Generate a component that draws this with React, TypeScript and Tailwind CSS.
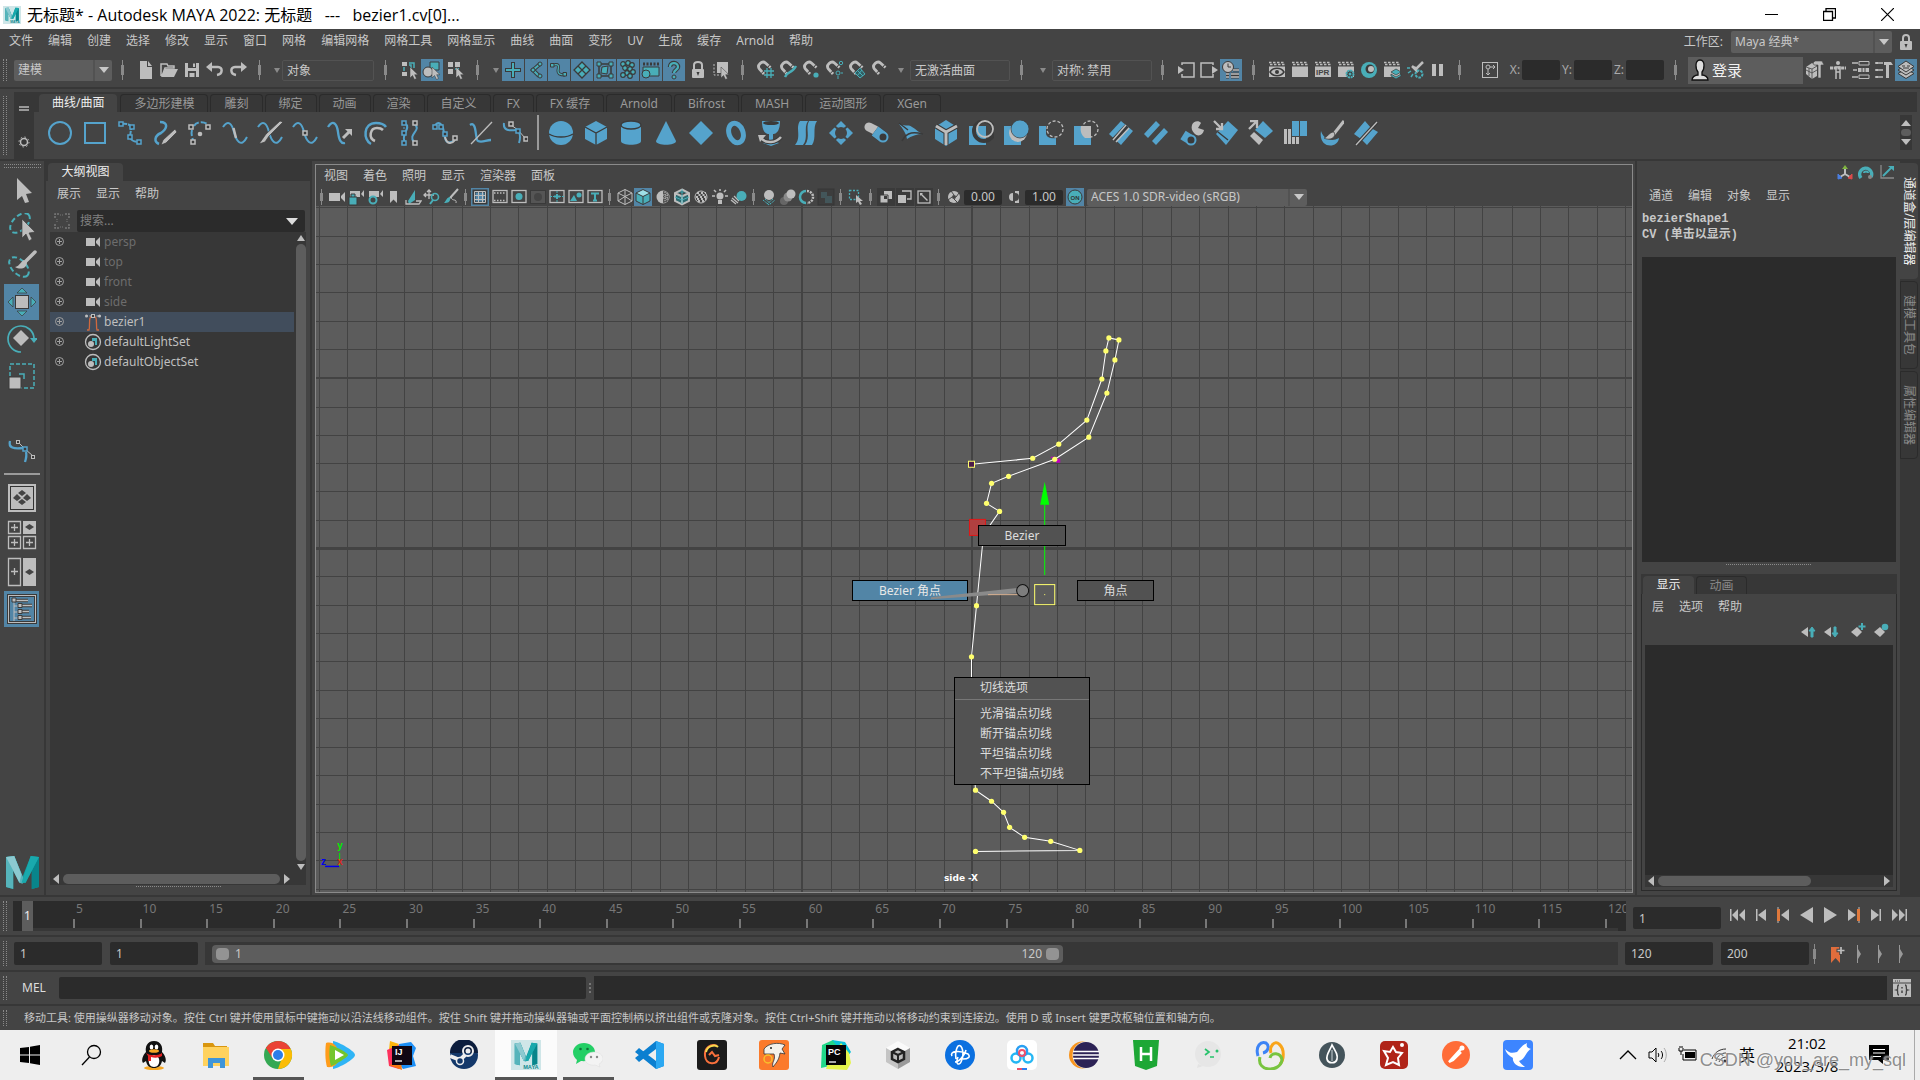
import React from 'react';

const G = '#bdbdbd';
const T = '#49aeb8';
const B = '#55a3cc';
const K = '#3a3a3a';

interface IconProps {
  box?: number;
  size?: number;
  children: React.ReactNode;
}

const Icon: React.FC<IconProps> = ({ box = 20, size, children }) => (
  <svg width={size ?? box} height={size ?? box} viewBox={`0 0 ${box} ${box}`} fill="none" className="shrink-0" aria-hidden="true">
    {children}
  </svg>
);

const Tool: React.FC<{ label: string; className?: string; active?: boolean; children: React.ReactNode }> = ({ label, className = 'h-[22px] w-[23px]', active, children }) => (
  <button type="button" aria-label={label} className={`flex shrink-0 items-center justify-center ${className}`}>
    <span className={`flex h-full w-full items-center justify-center ${active ? 'mr-px bg-[#5285a6]' : ''}`}>{children}</span>
  </button>
);

const Bar: React.FC<{ className?: string; h?: number }> = ({ className = 'w-[22px]', h = 20 }) => (
  <span className={`flex shrink-0 justify-center ${className}`}>
    <svg width="4" height={h} viewBox={`0 0 4 ${h}`} aria-hidden="true">
      <path d={`M1.5 0V${h}`} stroke="#8a8a8a" />
      <rect x="0" y={h / 4} width="3" height={h / 2} fill="#8a8a8a" />
    </svg>
  </span>
);

const Caret: React.FC<{ className?: string }> = ({ className = 'w-[11px]' }) => (
  <span className={`flex shrink-0 justify-center ${className}`}>
    <svg width="6" height="5" viewBox="0 0 6 5" aria-hidden="true"><path d="M0 0H6L3 5Z" fill="#8a8a8a" /></svg>
  </span>
);

const Grip: React.FC = () => <span className="my-1 ml-[3px] w-1 shrink-0 self-stretch border-x border-dotted border-[#8a8a8a]" />;

const Dropdown: React.FC<{ label: string; value: string; className: string }> = ({ label, value, className }) => (
  <div className={`flex shrink-0 items-stretch overflow-hidden rounded-xs bg-[#5d5d5d] ${className}`}>
    <select aria-label={label} className="min-w-0 flex-1 appearance-none bg-transparent pl-1 text-[#c8c8c8] outline-none">
      <option>{value}</option>
    </select>
    <span className="flex w-[19px] items-center justify-center border-l-2 border-[#525252]">
      <svg width="10" height="6" viewBox="0 0 10 6" aria-hidden="true"><path d="M0 0H10L5 6Z" fill="#c8c8c8" /></svg>
    </span>
  </div>
);

const MenuRow: React.FC<{ items: string[]; className?: string }> = ({ items, className = '' }) => (
  <nav className={`flex gap-[15px] ${className}`}>
    {items.map((m) => <button type="button" key={m} className="whitespace-nowrap">{m}</button>)}
  </nav>
);

const Rule: React.FC = () => <div className="h-0.5 shrink-0 bg-[#373737]" />;

/* ---------- shared drawings ---------- */

const Node: React.FC<{ x: number; y: number; c?: string }> = ({ x, y, c = B }) => (
  <rect x={x - 2} y={y - 2} width="4" height="4" fill={K} stroke={c} strokeWidth="1.5" />
);

const Clapper: React.FC<{ children?: React.ReactNode; c?: string }> = ({ children, c = G }) => (
  <Icon>
    <path d="M2 2.500H18" stroke={c} strokeWidth="1.500" strokeDasharray="2.500 1.500" />
    <path d="M3 4.500H18" stroke={c} strokeWidth="1.500" strokeDasharray="2.500 1.500" />
    <path d="M2 6.500H18V17H2Z" fill={c} />
    {children}
  </Icon>
);

const Magnet: React.FC<{ children?: React.ReactNode }> = ({ children }) => (
  <Icon>
    <path d="M8 14L3.500 9C0.500 5.500 6 0 9.500 3L14.500 7.500" stroke={G} strokeWidth="2.800" />
    <path d="M5.200 13.400L8.200 10.600M11.500 7.500L14 4.500" stroke={K} />
    {children}
  </Icon>
);

const MayaLogo: React.FC<{ size: number; plate?: boolean }> = ({ size, plate }) => (
  <svg width={size} height={size} viewBox="0 0 32 32" aria-hidden="true">
    {plate && <rect width="32" height="32" fill="#cfe6e8" />}
    <g transform={plate ? 'translate(4 3) scale(.75)' : ''}>
      <path d="M0 1L8 0L16 20L24 0L32 1V30L25 32V14L19 26H13L7 14V32L0 30Z" fill="#109b9f" />
      <path d="M0 1L8 0L18 24L16 27L13 26L7 14V32L0 30Z" fill="#56b4bb" />
      <path d="M0 1L8 0L15 18L13 26L7 14Z" fill="#8cc9d0" />
      <path d="M32 1V30L25 32V14Z" fill="#08858b" />
      <path d="M24 0L32 1L19 26H15Z" fill="#19a9ad" />
    </g>
    {plate && <text x="13" y="31" fontSize="6" fontWeight="700" fontFamily="Liberation Sans, sans-serif" fill="#128a90">MAYA</text>}
  </svg>
);

const fileIcons: [string, React.ReactNode][] = [
  ['新建场景', <Icon><path d="M4 1H11V7H16V19H4Z" fill={G} /><path d="M12 1L16 6H12Z" fill={G} /></Icon>],
  ['打开场景', <Icon><path d="M2 16V4H8L9 6H15V8H6L3 16" stroke={G} strokeWidth="1.500" /><path d="M6 9H19L15 17H2Z" fill={G} /></Icon>],
  ['保存场景', <Icon><path d="M3 3H17V17H3Z" fill={G} /><path d="M6 3H14V8H6ZM6 11H14V17H6Z" fill="#444" /><path d="M11 3.500H13V7H11ZM7.500 13H12.500V17H7.500Z" fill={G} /></Icon>],
  ['撤销', <Icon><path d="M6 7H13C18 7 18 14 12 15" stroke={G} strokeWidth="2.500" /><path d="M1 7L7 2V12Z" fill={G} /></Icon>],
  ['重做', <Icon><path d="M14 7H7C2 7 2 14 8 15" stroke={G} strokeWidth="2.500" /><path d="M19 7L13 2V12Z" fill={G} /></Icon>],
];

const pointer = <path d="M10 7V18L12.500 15.500L14.500 19.500L16.500 18.500L14.700 14.700H18Z" fill={G} stroke={K} strokeWidth=".5" />;

const maskIcons: [string, React.ReactNode][] = [
  ['控制柄', <><path d="M10 2V18M2 10H18" stroke={K} strokeWidth="4" /><path d="M10 3V17M3 10H17" stroke={T} strokeWidth="2" /></>],
  ['关节', <><path d="M14 4L7 10L13 16" stroke={K} strokeWidth="4" /><path d="M14 4L7 10L13 16" stroke={T} strokeWidth="2" /><circle cx="14" cy="4" r="2" fill={T} stroke={K} /><circle cx="7" cy="10" r="2" fill={T} stroke={K} /><circle cx="14" cy="16" r="2" fill={T} stroke={K} /></>],
  ['曲线', <><path d="M4 5C12 3 9 8 9 11S11 15 16 15" stroke={K} strokeWidth="3" /><path d="M4 5C12 3 9 8 9 11S11 15 16 15" stroke={T} strokeWidth="1.300" /><path d="M1.500 3.500H5V7H1.500ZM14 12.500H17.500V16H14Z" fill={T} stroke={K} /></>],
  ['曲面', <path d="M10 2L18 10L10 18L2 10ZM6 6L14 14M14 6L6 14" fill={T} stroke={K} strokeWidth="1.300" />],
  ['变形', <><path d="M4 4H16V16H4Z" fill="none" stroke={K} strokeWidth="1.500" /><path d="M7 7L13 6L12 14L6 13Z" fill={T} stroke={K} /><path d="M2 2H6V6H2ZM14 2H18V6H14ZM2 14H6V18H2ZM14 14H18V18H14Z" fill={T} stroke={K} /></>],
  ['动力学', <>{[[5, 4], [10, 3], [14, 5], [7, 8], [12, 9], [15, 12], [9, 13], [5, 15], [12, 16]].map(([x, y]) => <circle key={`${x}${y}`} cx={x} cy={y} r="2.300" fill={T} stroke={K} strokeWidth="1.200" />)}</>],
  ['渲染', <><path d="M2 4H18" stroke={K} strokeWidth="3" strokeDasharray="2 1.500" /><path d="M2 7H18V16H2Z" fill={T} stroke={K} /><circle cx="5" cy="14" r="4" fill={T} stroke={K} /></>],
  ['杂项', <><path d="M6 7C6 1.500 14 2 14 7C14 10 10 9.500 10 13" stroke={K} strokeWidth="4.500" /><path d="M6 7C6 1.500 14 2 14 7C14 10 10 9.500 10 13" stroke={T} strokeWidth="2.300" /><circle cx="10" cy="17" r="2" fill={T} stroke={K} /></>],
];

const snapIcons: [string, React.ReactNode][] = [
  ['捕捉到栅格', <path d="M8 11H18M8 15H18M11 8V18M15 8V18" stroke={T} strokeWidth="1.300" />],
  ['捕捉到曲线', <path d="M6 17C9 10 12 15 17 6" stroke={T} strokeWidth="2.500" />],
  ['捕捉到点', <circle cx="14" cy="15" r="2.600" fill={T} />],
  ['捕捉到投影中心', <><circle cx="16" cy="3" r="1.700" stroke={T} /><circle cx="13" cy="13" r="2" stroke={T} /><path d="M13 16V19M16 13H18" stroke={T} /></>],
  ['捕捉到视图平面', <path d="M12 8L17 14L12 18L7 13ZM9 10L15 16M14 10L9 16" stroke={T} fill="#315e63" />],
  ['激活', null],
];

const renderIcons: [string, React.ReactNode][] = [
  ['显示渲染视图', <Clapper><path d="M3 12C6 7 14 7 17 12C14 17 6 17 3 12Z" fill={G} stroke={K} strokeWidth="1.500" /><circle cx="10" cy="12" r="2" fill={K} /></Clapper>],
  ['渲染当前帧', <Clapper />],
  ['IPR 渲染', <Clapper><text x="3" y="15" fontSize="8" fontWeight="700" fontFamily="Liberation Sans, sans-serif" fill="#444">IPR</text></Clapper>],
  ['渲染设置', <Clapper><circle cx="14" cy="14" r="3.500" fill={K} stroke={T} strokeWidth="2" strokeDasharray="2 .7" /><circle cx="14" cy="14" r="1.500" fill={T} /></Clapper>],
  ['Hypershade', <Icon><circle cx="10" cy="10" r="8" fill={T} /><circle cx="11" cy="9" r="4.500" fill={K} /><circle cx="12" cy="9" r="3" fill={G} /></Icon>],
  ['渲染设置编辑器', <Clapper><path d="M14 9L19 12L14 15L9 12ZM9 14L14 17L19 14V16L14 19L9 16Z" fill={T} stroke={K} strokeWidth=".7" /></Clapper>],
  ['灯光编辑器', <Icon><path d="M18 2L11 9L9 7M7 6L13 12" stroke={G} strokeWidth="2.500" /><circle cx="14" cy="14" r="3.500" stroke={T} strokeWidth="2" strokeDasharray="2.500 1" /><path d="M2 8H5M3 13L6 11M6 17L8 14" stroke={T} strokeWidth="1.500" /></Icon>],
  ['暂停', <Icon><path d="M6 4V16M13 4V16" stroke={G} strokeWidth="4" /></Icon>],
];

const S = 'M1 7C6 -1 10 4 12 12S19 29 25 17';

const shelfCurves: React.ReactNode[] = [
  <circle cx="13" cy="13" r="11" stroke={B} strokeWidth="2" />,
  <rect x="3" y="3" width="20" height="20" stroke={B} strokeWidth="2" />,
  <><path d="M3 4C10 3 15 4 14 10S11 21 21 22" stroke={B} strokeWidth="2" strokeDasharray="7 1" /><Node x={4} y={4} /><Node x={15} y={7} /><Node x={13} y={17} /><Node x={22} y={22} /></>,
  <><path d="M8 2C17 2 15 9 9 13C2 16 2 22 7 24" stroke={B} strokeWidth="2.500" /><path d="M23 9L25 12L14 23L9 25L11 20Z" fill={G} stroke={K} strokeWidth=".7" /></>,
  <><path d="M7 6C9 2 16 1 20 4M5 10C4 13 5 17 6 20" stroke={B} strokeWidth="2" strokeDasharray="6 2" /><Node x={4} y={7} c={G} /><Node x={21} y={7} c={G} /><Node x={6} y={22} c={G} /><circle cx="13" cy="14" r="2.300" fill={G} /></>,
  <><path d={S} stroke={B} strokeWidth="2" /><path d="M11.500 8L14 18" stroke={G} strokeWidth="2.500" /></>,
  <><path d={S} stroke={B} strokeWidth="2" /><path d="M26 2L12 16L8 22L2 24L9 14L23 1Z" fill={G} stroke={K} strokeWidth=".7" /></>,
  <><path d={S} stroke={B} strokeWidth="2" /><Node x={13} y={13} c={G} /></>,
  <><path d="M1 7C6 -1 10 4 11 12S14 24 18 23" stroke={B} strokeWidth="2.300" /><path d="M16 18L22 12" stroke={G} strokeWidth="3" /><path d="M18 9H25V16Z" fill={G} /></>,
  <><path d="M9 24C1 20 1 3 14 3C19 3 22 4 24 7" stroke={B} strokeWidth="2.500" /><path d="M13 21C6 18 8 8 15 8C19 8 20 9 21 10" stroke={G} strokeWidth="2.500" /></>,
  <><path d="M7 3V23" stroke={B} strokeDasharray="2 2" /><path d="M17 4C26 10 10 14 17 22M9 4C14 8 3 16 8 22" stroke={B} strokeWidth="2" /><Node x={7} y={3} /><Node x={7} y={13} /><Node x={7} y={23} /><Node x={18} y={3} c={G} /><Node x={18} y={23} c={G} /></>,
  <><path d="M2 7C6 -1 11 4 12 13S15 25 23 20" stroke={B} strokeWidth="2" /><path d="M13 17C15 25 20 24 23 20" stroke={G} strokeWidth="2" /><Node x={3} y={7} /><Node x={9} y={7} /><Node x={13} y={14} /><Node x={23} y={18} c={G} /></>,
  <><path d="M3 5C10 0 8 20 11 21C15 23 19 20 24 20" stroke={B} strokeWidth="2.300" /><path d="M4 24L25 2" stroke={G} strokeWidth="1.300" /></>,
  <><path d="M2 3C1 10 6 11 14 10M17 12C19 17 18 20 17 23" stroke={B} strokeWidth="2" /><path d="M9 5L16 10L23 18" stroke={G} /><Node x={9} y={4} c={G} /><Node x={16} y={11} /><Node x={24} y={19} c={G} /></>,
];

const shelfSurfaces: React.ReactNode[] = [
  <><circle cx="13" cy="13" r="12" fill={B} /><path d="M1 14C7 18 19 18 25 14" stroke={K} strokeWidth="1.500" /></>,
  <><path d="M13 1L24 7V19L13 25L2 19V7Z" fill={B} /><path d="M2 7L13 13L24 7M13 13V25" stroke={K} strokeWidth="1.300" /></>,
  <><path d="M3 5V21C3 26 23 26 23 21V5Z" fill={B} /><ellipse cx="13" cy="5" rx="10" ry="4" fill={B} stroke={K} strokeWidth="1.300" /></>,
  <path d="M13 1L23 21C23 26 3 26 3 21Z" fill={B} />,
  <path d="M13 1L25 13L13 25L1 13Z" fill={B} />,
  <ellipse cx="13" cy="13" rx="7" ry="10" stroke={B} strokeWidth="5" transform="rotate(-20 13 13)" />,
  <><path d="M4 1H22C22 13 17 14 15 14V20L21 23L13 26L5 23L11 20V14C8 14 4 12 4 1Z" fill={B} /><ellipse cx="13" cy="3" rx="8" ry="2" fill={K} /><path d="M3 18C8 24 18 23 23 17" stroke={K} strokeWidth="4.500" /><path d="M3 18C8 24 18 23 23 17" stroke={G} strokeWidth="2.500" /><path d="M0 15H8L2 22Z" fill={G} /></>,
  <path d="M7 1H15C10 8 16 18 10 25H2C9 17 2 8 7 1ZM16 1H24C19 8 24 18 19 25H12C18 17 12 8 16 1Z" fill={B} />,
  <><path d="M13 1L25 13L13 25L1 13Z" fill={B} /><circle cx="13" cy="13" r="6" fill="#444" /><path d="M5 5L10 9M21 5L16 9M5 21L10 17M21 21L16 17" stroke="#444" strokeWidth="2" /></>,
  <><path d="M6 7L12 10" stroke={G} strokeWidth="9" strokeLinecap="round" /><path d="M12 11L20 17" stroke={K} strokeWidth="12" /><path d="M12 11L20 17" stroke={B} strokeWidth="11" /><circle cx="20" cy="17" r="4.500" fill={K} stroke={B} strokeWidth="2" /></>,
  <><path d="M1 4C9 7 11 4 14 7C19 10 20 12 25 14C19 14 13 16 9 19C8 13 5 9 1 4Z" fill={B} /><path d="M4 21C9 11 17 12 25 14M1 3L10 10" stroke={K} strokeWidth="1.500" /></>,
  <><path d="M13 0L24 7V19L13 26L2 19V7Z" fill={B} /><path d="M3 6L13 12L24 6M13 12V25" stroke={K} strokeWidth="5" /><path d="M3 6L13 12L24 6M13 12V25" stroke={G} strokeWidth="3" /></>,
  <><path d="M1 6H18V25H1Z" fill={B} /><circle cx="16" cy="11" r="10" stroke={K} strokeWidth="4" /><circle cx="17" cy="9" r="8" stroke={G} strokeWidth="1.800" /></>,
  <><path d="M1 6H18V25H1Z" fill={B} /><circle cx="15" cy="13" r="9" fill={G} /><circle cx="17" cy="9" r="9" fill={B} stroke={K} strokeWidth=".7" /></>,
  <><path d="M1 6H8V14C9 18 14 19 18 18V25H1Z" fill={B} /><circle cx="17" cy="9" r="8" stroke={G} strokeDasharray="3 2" strokeWidth="1.300" /></>,
  <><path d="M1 6H18V25H1Z" fill={B} /><path d="M8 6H18V18H12C8 15 7 10 8 6Z" fill={G} /><circle cx="17" cy="9" r="8" stroke={G} strokeDasharray="3 2" strokeWidth="1.300" /></>,
  <><path d="M13 1L25 11L13 25L1 14Z" fill={B} /><path d="M6 20L19 6" stroke={K} strokeWidth="5" /><path d="M5 20L18 5M8 22L21 8" stroke={G} strokeWidth="1.500" /></>,
  <path d="M13 1L17 5L5 18L1 14ZM21 8L25 12L13 25L9 21Z" fill={B} />,
  <><path d="M14 5C15 1 21 0 23 3L20 8L26 10C25 16 19 17 16 13C14 11 13 8 14 5Z" fill={G} /><path d="M5 15L13 20" stroke={B} strokeWidth="10" /><circle cx="13" cy="20" r="4.500" fill={K} stroke={B} strokeWidth="2" /></>,
  <><path d="M15 1L25 10L13 25L3 14Z" fill={B} /><path d="M5 12L15 20" stroke={K} strokeWidth="1.500" /><path d="M1 1L8 8M9 3V9H3" stroke={G} strokeWidth="2.300" /></>,
  <><path d="M15 1L25 11L17 18L7 10Z" fill={B} /><path d="M6 12L15 20L11 25L2 16Z" fill={G} /><path d="M1 9L8 2M2 1H9V8" stroke={G} strokeWidth="2.300" /></>,
  <><path d="M9 1H16V16H9ZM17 1H24V16H17Z" fill={B} /><path d="M2.500 9V24M6.500 9V24M10.500 17V24M14.500 17V24" stroke={G} strokeWidth="3" /></>,
  <><path d="M3 11C0 29 20 29 21 18C14 22 6 20 3 11Z" fill={B} /><path d="M26 1L15 15" stroke={G} strokeWidth="3" /><path d="M16 12C19 18 11 21 6 18C10 17 11 12 16 12Z" fill={G} stroke={K} strokeWidth=".7" /></>,
  <><path d="M12 1L18 8L25 12L14 25L8 19L1 14Z" fill={B} /><path d="M3 25L24 2" stroke={K} strokeWidth="3.500" /><path d="M3 25L24 2" stroke={G} strokeWidth="1.300" /></>,
];

const shelfTabs = ['曲线/曲面', '多边形建模', '雕刻', '绑定', '动画', '渲染', '自定义', 'FX', 'FX 缓存', 'Arnold', 'Bifrost', 'MASH', '运动图形', 'XGen'];

const StatusLine: React.FC = () => (
  <div className="flex h-8 shrink-0 items-center overflow-hidden pb-0.5">
    <Grip />
    <Dropdown label="菜单集" value="建模" className="ml-[7px] h-[21px] w-[98px]" />
    <Bar />
    {fileIcons.map(([n, i]) => <Tool key={n} label={n}>{i}</Tool>)}
    <Bar />
    <Caret />
    <input aria-label="选择遮罩" defaultValue="对象" className="h-[21px] w-[92px] shrink-0 rounded-xs border border-[#525252] bg-transparent px-1 outline-none" />
    <Bar className="w-6" />
    <Tool label="按层次选择"><Icon><path d="M2 2H7V6H2ZM2 12H7V16H2Z" fill={G} /><path d="M4 7V11M9 3H14V8M9 5H11V9" stroke={T} strokeWidth="1.500" />{pointer}</Icon></Tool>
    <Tool label="按对象选择" active><Icon><path d="M8 2H17V10H8Z" fill={T} stroke={K} /><circle cx="6" cy="12" r="5" fill={G} stroke={K} />{pointer}</Icon></Tool>
    <Tool label="按组件选择"><Icon><path d="M2 2H7V7H2ZM9 2H14V7H9ZM2 9H7V14H2Z" fill={G} /><path d="M9 9H13" stroke={T} strokeWidth="2" />{pointer}</Icon></Tool>
    <Bar />
    <Caret className="w-[13px]" />
    {maskIcons.map(([n, i]) => <Tool key={n} label={n} active><Icon>{i}</Icon></Tool>)}
    <Tool label="锁定当前选择"><Icon><path d="M6 9V5C6 1 14 1 14 5V9" stroke={G} strokeWidth="2" /><rect x="4" y="9" width="12" height="9" rx="1" fill={G} /><path d="M8.500 12H11.500L10 16Z" fill={K} /></Icon></Tool>
    <Tool label="高亮显示选择"><Icon><rect x="6" y="2" width="11" height="11" fill={G} /><path d="M3 4V15H10" stroke={G} strokeDasharray="2 1.500" />{pointer}</Icon></Tool>
    <Bar />
    {snapIcons.map(([n, i]) => <Tool key={n} label={n}><Magnet>{i}</Magnet></Tool>)}
    <Caret className="w-[18px]" />
    <input aria-label="激活曲面" defaultValue="无激活曲面" className="h-[21px] w-[100px] shrink-0 rounded-xs border border-[#525252] bg-transparent px-1 outline-none" />
    <Bar className="w-6" />
    <Caret className="w-[18px]" />
    <input aria-label="对称" defaultValue="对称: 禁用" className="h-[21px] w-[100px] shrink-0 rounded-xs border border-[#525252] bg-transparent px-1 outline-none" />
    <Bar />
    <Tool label="输入"><Icon><path d="M6 5V3H18V17H6V14" stroke={G} strokeWidth="1.500" /><path d="M2 6L8 10L2 14Z" fill={G} /></Icon></Tool>
    <Tool label="输出"><Icon><path d="M14 5V3H2V17H14V14" stroke={G} strokeWidth="1.500" /><path d="M13 6L19 10L13 14Z" fill={G} /></Icon></Tool>
    <Tool label="构建历史" active><Icon><circle cx="7" cy="7" r="5.500" fill={G} stroke={K} /><path d="M7 3.500V7H10" stroke={K} /><path d="M5 14H8M10 14H18M5 17H8M10 17H18M12 10H18" stroke={K} strokeWidth="3" /><path d="M5 14H8M10 14H18M5 17H8M10 17H18M12 10H18" stroke={G} strokeWidth="1.300" /></Icon></Tool>
    <Bar />
    {renderIcons.map(([n, i]) => <Tool key={n} label={n}>{i}</Tool>)}
    <Bar />
    <Tool label="绝对变换" className="h-[22px] w-[37px]"><Icon><rect x="2.500" y="2.500" width="15" height="15" stroke={G} /><circle cx="8" cy="7" r="2" stroke={G} /><path d="M8 9V15M6 13L8 15L10 13M10 7H15M13 5L15 7L13 9" stroke={G} /></Icon></Tool>
    {['X', 'Y', 'Z'].map((a) => (
      <label key={a} className="flex shrink-0 items-center text-[#aaa]">
        <span className="w-[14px] text-center">{a}:</span>
        <input className="h-5 w-[38px] rounded-xs bg-[#2b2b2b] outline-none" />
      </label>
    ))}
    <Bar className="w-6" />
    <button type="button" className="flex h-[27px] w-[115px] shrink-0 items-center gap-[3px] bg-[#5d5d5d] pl-[3px] text-[15px] text-[#f2f2f2]">
      <svg width="18" height="22" viewBox="0 0 18 22" aria-hidden="true"><path d="M9 1C3 1 5 11 7 13V16C4 16 1 18 1 21H17C17 18 14 16 11 16V13C13 11 15 1 9 1Z" fill="#ddd" stroke="#111" strokeWidth="1.300" /></svg>
      登录
    </button>
    <Tool label="建模工具包"><Icon><path d="M1 7L7 3L12 6L12 16L7 19L1 14Z" fill={G} /><path d="M4 8V16M1 10L7 13L12 10M7 9V19M1 7L7 9L12 6" stroke="#444" strokeWidth=".8" /><path d="M8 3L10 1H17L19 5H16V18H13V5H9Z" fill={G} stroke="#444" strokeWidth=".6" /></Icon></Tool>
    <Tool label="角色控制"><Icon><circle cx="10" cy="3" r="2" fill={G} /><path d="M2 8H18" stroke={G} strokeWidth="3" strokeDasharray="3 .7" /><path d="M8 7H12V12H8ZM8 12V19M12 12V19" stroke={G} strokeWidth="1.500" /></Icon></Tool>
    <Tool label="属性编辑器"><Icon><path d="M1 3H7M1 17H7M2 10H6" stroke={G} strokeWidth="1.500" /><path d="M8 1.500H18V5H8ZM8 15H18V18.500H8Z" stroke={G} /><path d="M7 8H18V12H7Z" fill={G} /><path d="M11 8V12M14 8V12" stroke="#444" /></Icon></Tool>
    <Tool label="工具设置"><Icon><path d="M1 3H9M1 10H9M1 17H9" stroke={G} strokeWidth="1.500" /><path d="M2 2H4V4H2ZM2 9H4V11H2ZM2 16H4V18H2ZM10 2H17L19 5H15V18H12V5H10Z" fill={G} /></Icon></Tool>
    <Tool label="通道盒/层编辑器" active><Icon><path d="M10 9L18 13.500L10 18.500L2 13.500Z" fill={G} stroke={K} /><path d="M10 5L18 10L10 15L2 10Z" fill={G} stroke={K} /><path d="M10 1L18 6.500L10 12L2 6.500Z" fill={G} stroke={K} /><path d="M6 6H9M11 6H14M7 8H13" stroke={K} /></Icon></Tool>
  </div>
);

const Shelf: React.FC = () => (
  <div className="flex h-[67px] shrink-0">
    <Grip />
    <div className="ml-[7px] flex w-5 shrink-0 flex-col items-center justify-around bg-[#373737]">
      <Icon size={12} box={12}><path d="M1 4H11M1 7H11" stroke="#999" strokeWidth="2" /></Icon>
      <Icon size={12} box={12}><circle cx="6" cy="6" r="3.500" stroke={G} strokeWidth="1.500" /><circle cx="6" cy="6" r="5" stroke={G} strokeDasharray="1.500 2.400" /></Icon>
    </div>
    <div className="flex min-w-0 flex-1 flex-col">
      <div className="mr-[3px] flex h-5 items-end gap-0.5 bg-[#373737] pl-[5px]">
        {shelfTabs.map((t, i) => (
          <button type="button" key={t} className={`h-[18px] whitespace-nowrap rounded-t-sm px-[13px] ${i === 0 ? 'mr-px bg-[#444] text-[#eee]' : 'border border-b-0 border-[#2b2b2b] text-[#999]'}`}>{t}</button>
        ))}
      </div>
      <div className="flex flex-1 items-center overflow-hidden pb-1.5 pl-2">
        {shelfCurves.map((s, i) => <Tool key={i} label={`曲线 ${i + 1}`} className="h-8 w-[35px]"><Icon box={26}>{s}</Icon></Tool>)}
        <span className="ml-[5px] mr-1 h-[35px] w-0.5 shrink-0 bg-[#9a9a9a]" />
        {shelfSurfaces.map((s, i) => <Tool key={i} label={`曲面 ${i + 1}`} className="h-8 w-[35px]"><Icon box={26}>{s}</Icon></Tool>)}
        <div className="ml-auto mr-2 flex h-[35px] w-3 shrink-0 flex-col items-center justify-between bg-[#373737] py-1">
          <Icon size={10} box={10}><path d="M0 7H10L5 1Z" fill={G} /></Icon>
          <span className="h-2.5 w-2.5 rounded-full bg-[#5d5d5d]" />
          <Icon size={10} box={10}><path d="M0 3H10L5 9Z" fill={G} /></Icon>
        </div>
      </div>
    </div>
  </div>
);

const bezierTool = <><path d="M3 5C1 12 7 13 16 12M19 16C20 20 19 23 18 26" stroke={B} strokeWidth="2.300" /><path d="M11 6L18 13L26 20" stroke={G} /><rect x="9.500" y="4.500" width="3" height="3" fill={K} stroke={G} /><Node x={18} y={13} /><rect x="24.500" y="19.500" width="3" height="3" fill={K} stroke={G} /></>;

const Toolbox: React.FC = () => (
  <aside className="flex w-11 shrink-0 flex-col items-center">
    <span className="mb-[5px] mt-[3px] h-1 w-[37px] border-y border-dotted border-[#8a8a8a]" />
    <div className="flex flex-col gap-px">
      <Tool label="选择工具" className="h-9 w-9"><Icon box={30}><path d="M10 2V24L15 20L18 27L22 26L19 18L25 17Z" fill={G} /></Icon></Tool>
      <Tool label="套索工具" className="h-9 w-9"><Icon box={30}><ellipse cx="13" cy="10" rx="12" ry="7" transform="rotate(-45 13 10)" stroke={T} strokeWidth="2" strokeDasharray="5 3" /><path d="M15 6V25L19 21L22 28L25 26L22 20L28 19Z" fill={G} stroke={K} strokeWidth=".6" /></Icon></Tool>
      <Tool label="绘制选择工具" className="h-9 w-9"><Icon box={30}><ellipse cx="12" cy="17" rx="12" ry="7" transform="rotate(45 12 17)" stroke={T} strokeWidth="2" strokeDasharray="5 3" /><path d="M28 2L19 11" stroke={G} strokeWidth="3.500" strokeLinecap="round" /><path d="M20 12C20 19 13 20 8 17C13 16 14 11 17 10Z" fill={G} /></Icon></Tool>
      <Tool label="移动工具" className="h-9 w-9" active><Icon box={30}><rect x="8.500" y="8.500" width="13" height="13" fill={G} stroke={K} /><path d="M10 6L15 1L20 6ZM10 24L15 29L20 24ZM6 10L1 15L6 20ZM24 10L29 15L24 20Z" fill={T} stroke={K} strokeWidth=".7" /></Icon></Tool>
      <Tool label="旋转工具" className="h-9 w-9"><Icon box={30}><path d="M27 14A13 13 0 1 0 14 28" stroke={T} strokeWidth="1.700" /><path d="M23 14H31L27 19Z" fill={T} /><path d="M14 6L22 14L14 22L6 14Z" fill={G} /></Icon></Tool>
      <Tool label="缩放工具" className="h-9 w-9"><Icon box={30}><rect x="3" y="3" width="24" height="24" stroke={T} strokeWidth="1.500" strokeDasharray="4 2" /><rect x="2" y="16" width="12" height="12" fill={G} stroke={K} /><path d="M12 13H17V18" stroke={T} strokeWidth="1.500" /></Icon></Tool>
    </div>
    <Tool label="上一个工具" className="mt-[39px] h-9 w-9"><Icon box={30}>{bezierTool}</Icon></Tool>
    <span className="mb-[5px] mt-1 h-0.5 w-9 shrink-0 bg-[#9a9a9a]" />
    <div className="flex flex-col gap-px">
      <Tool label="单个透视视图" className="h-9 w-9"><Icon box={30}><rect x="1" y="1" width="28" height="28" fill={G} /><rect x="3.500" y="3.500" width="23" height="23" stroke="#333" /><path d="M15 7L19 10L15 13L11 10ZM10 11L14 15L10 18L6 15ZM20 11L24 15L20 18L16 15ZM15 16L19 19L15 22L11 19Z" fill="#444" /></Icon></Tool>
      <Tool label="四个视图" className="h-9 w-9"><Icon box={30}><path d="M1.500 1.500H13.500V13.500H1.500ZM1.500 16.500H13.500V28.500H1.500ZM16.500 16.500H28.500V28.500H16.500ZM7.500 4V11M4 7.500H11M7.500 19V26M4 22.500H11M22.500 19V26M19 22.500H26" stroke={G} strokeWidth="1.300" /><rect x="16" y="1" width="13" height="13" fill={G} /><path d="M18 7L22.500 4L27 7L22.500 10Z" fill="#444" /></Icon></Tool>
      <Tool label="两个窗格" className="h-9 w-9"><Icon box={30}><path d="M1.500 1.500H13.500V28.500H1.500ZM7.500 11V18M4 14.500H11" stroke={G} strokeWidth="1.300" /><rect x="16" y="1" width="13" height="28" fill={G} /><path d="M18 15L22.500 12L27 15L22.500 18Z" fill="#444" /></Icon></Tool>
      <Tool label="大纲视图" className="h-9 w-9" active><Icon box={30}><rect x="1.500" y="1.500" width="27" height="27" stroke={K} strokeWidth="3" /><rect x="1.500" y="1.500" width="27" height="27" stroke={G} /><path d="M7 8V27M7 12H13M7 18H13M7 24H13" stroke={G} /><path d="M7 6.500H21M13 11.500H25M13 17.500H22M13 23.500H24" stroke={K} strokeWidth="3.500" /><path d="M7 6.500H21M13 11.500H25M13 17.500H22M13 23.500H24" stroke={G} strokeWidth="1.500" /><path d="M5 4H9V8H5ZM11 9.500H15V13.500H11ZM11 15.500H15V19.500H11ZM11 21.500H15V25.500H11Z" fill={G} stroke={K} /></Icon></Tool>
    </div>
    <div className="mb-1.5 mt-auto"><MayaLogo size={33} /></div>
  </aside>
);

const treeRows: { name: string; kind: 'camera' | 'curve' | 'set' }[] = [
  { name: 'persp', kind: 'camera' },
  { name: 'top', kind: 'camera' },
  { name: 'front', kind: 'camera' },
  { name: 'side', kind: 'camera' },
  { name: 'bezier1', kind: 'curve' },
  { name: 'defaultLightSet', kind: 'set' },
  { name: 'defaultObjectSet', kind: 'set' },
];

const treeIcon = {
  camera: <Icon size={18} box={18}><path d="M2 5H11V13H2ZM16 4V14L12 10V8Z" fill={G} /></Icon>,
  curve: <Icon size={18} box={18}><path d="M3 17H5C6 14 5 8 6 5L8 3M15 17H13C12 14 13 8 12 5L10 3" stroke="#d0693e" strokeWidth="1.300" /><path d="M2 3H17" stroke={G} strokeDasharray="2 1.500" /><circle cx="2.500" cy="3" r="1.500" fill={G} /><circle cx="15.500" cy="3" r="1.500" fill={G} /><rect x="7.500" y="1.500" width="3" height="3" stroke={G} fill={K} /></Icon>,
  set: <Icon size={18} box={18}><circle cx="9" cy="9" r="7.500" stroke={G} strokeWidth="1.300" /><path d="M8 5H13V12H11V8H8Z" fill={T} /><circle cx="7" cy="11" r="3" fill={G} /></Icon>,
};

const HScroll: React.FC<{ className?: string; thumb: string }> = ({ className = '', thumb }) => (
  <div className={`flex h-3 shrink-0 items-center gap-1 bg-[#373737] px-[3px] ${className}`}>
    <svg width="6" height="10" viewBox="0 0 6 10" aria-hidden="true"><path d="M6 0V10L0 5Z" fill={G} /></svg>
    <div className="flex-1"><div className={`h-2.5 rounded-full bg-[#5d5d5d] ${thumb}`} /></div>
    <svg width="6" height="10" viewBox="0 0 6 10" aria-hidden="true"><path d="M0 0V10L6 5Z" fill={G} /></svg>
  </div>
);

const Outliner: React.FC = () => (
  <section className="flex w-[264px] shrink-0 flex-col">
    <div className="flex h-5 shrink-0 items-end bg-[#373737] pl-0.5">
      <button type="button" className="h-[18px] w-[75px] rounded-t-sm bg-[#444] text-[#eee]">大纲视图</button>
    </div>
    <MenuRow items={['展示', '显示', '帮助']} className="h-[29px] shrink-0 items-center pb-1 pl-[11px]" />
    <div className="flex h-[22px] shrink-0 items-center pl-[7px] pr-[5px]">
      <Icon size={18} box={18}><path d="M2 6V2H6M12 2H16V6M16 12V16H12M6 16H2V12" stroke="#777" strokeWidth="1.500" strokeDasharray="2 1" /><path d="M4 7V11M14 7V11M7 3H11M7 15H11" stroke="#777" strokeDasharray="1 1" /></Icon>
      <label className="ml-1.5 flex h-full flex-1 items-center rounded-xs bg-[#2b2b2b] pl-[3px] pr-[7px]">
        <input aria-label="搜索" placeholder="搜索..." className="min-w-0 flex-1 bg-transparent outline-none placeholder:text-[#808080]" />
        <svg width="12" height="7" viewBox="0 0 12 7" aria-hidden="true"><path d="M0 0H12L6 7Z" fill="#ddd" /></svg>
      </label>
    </div>
    <div className="ml-1 mr-1 flex min-h-0 flex-1 bg-[#373737]">
      <ul className="flex-1">
        {treeRows.map(({ name, kind }) => (
          <li key={name} className={`flex h-5 items-center pb-px ${name === 'bezier1' ? 'bg-[#414d5c]' : ''} ${kind === 'camera' ? 'text-[#6d6d6d]' : 'text-[#bfbfbf]'}`}>
            <button type="button" aria-label={`展开 ${name}`} className="ml-1 mr-[19px]">
              <Icon size={11} box={11}><circle cx="5.500" cy="5.500" r="4" stroke="#a0a0a0" /><path d="M3 5.500H8M5.500 3V8" stroke="#a0a0a0" /></Icon>
            </button>
            {treeIcon[kind]}
            <span className="ml-0.5">{name}</span>
          </li>
        ))}
      </ul>
      <div className="ml-0.5 flex w-2.5 flex-col items-center gap-[3px] py-[3px]">
        <svg width="8" height="6" viewBox="0 0 8 6" aria-hidden="true"><path d="M0 6H8L4 0Z" fill={G} /></svg>
        <div className="w-2.5 flex-1 rounded-full bg-[#5d5d5d]" />
        <svg width="8" height="6" viewBox="0 0 8 6" aria-hidden="true"><path d="M0 0H8L4 6Z" fill={G} /></svg>
      </div>
    </div>
    <HScroll className="mx-1 pr-4" thumb="w-full" />
    <span className="mx-auto mb-2 mt-px w-[85px] border-t border-dotted border-[#8a8a8a]" />
  </section>
);

const Frame: React.FC<{ children?: React.ReactNode }> = ({ children }) => <><rect x="2" y="2.500" width="14" height="12" stroke={G} strokeWidth="1.300" />{children}</>;

const cubeLines = 'M9 1.500L16 5V13L9 16.500L2 13V5ZM2 5L9 8.500L16 5M9 8.500V16.500';

const viewIcons: (React.ReactNode | 'bar')[] = [
  'bar',
  <path d="M1 5H12V13H1ZM17 4V14L13 10V8Z" fill={G} />,
  <><path d="M3 3H13V9H3ZM17 2V9L14 6Z" fill={G} /><path d="M2 9H10V17H2ZM4 9V6H8V9" fill={T} stroke={K} /></>,
  <><path d="M3 3H13V9H3ZM17 2V9L14 6Z" fill={G} /><circle cx="7" cy="12" r="3.500" stroke={T} strokeWidth="2" /></>,
  <path d="M5 3H12V15L8.500 11.500L5 15Z" fill={G} />,
  <><path d="M4 13L11 2V12L5 16Z" fill={T} /><path d="M2 12V16H15L17 13H12" stroke={G} strokeWidth="1.300" /></>,
  <><path d="M1 7H11M6 2V11M4 4L6 2L8 4M3 5L1 7L3 9" stroke={G} strokeWidth="1.300" /><circle cx="12" cy="9" r="3.500" stroke={T} strokeWidth="1.600" /><path d="M10 12L7 16" stroke={T} strokeWidth="2" /></>,
  <><path d="M16 1L8 10" stroke={G} strokeWidth="2" /><path d="M9 9C10 14 15 10 14 15" stroke={G} /><path d="M8 9C9 14 6 15 2 15C4 13 5 9 8 9Z" fill={T} /></>,
  'bar',
  <><rect x="3" y="3" width="12" height="12" stroke={K} strokeWidth="3" /><path d="M3.500 3.500H14.500V14.500H3.500ZM3.500 7.500H14.500M3.500 11.500H14.500M7.500 3.500V14.500M11.500 3.500V14.500" stroke={G} /></>,
  <Frame><path d="M3 5H15M3 12.500H15" stroke={G} strokeDasharray="1.500 1.500" strokeWidth="1.500" /></Frame>,
  <Frame><circle cx="9" cy="8.500" r="3.500" fill={T} /></Frame>,
  <><rect x="1.500" y="2.500" width="15" height="13" fill="#555" stroke={K} /><circle cx="9" cy="9" r="4" fill="#444" /></>,
  <Frame><path d="M2 8.500H16M9 3V14" stroke={T} strokeDasharray="2 1" /><path d="M6 8.500H12M9 6V11" stroke={T} strokeWidth="2" /></Frame>,
  <Frame><path d="M3 13L7 7L10 13Z" fill={T} /><circle cx="12" cy="7" r="2.500" fill={T} /></Frame>,
  <Frame><path d="M5 5.500H13M9 5V13M7 12.500H11" stroke={T} strokeWidth="2" /></Frame>,
  'bar',
  <path d={`${cubeLines}M2 13L9 8.500L16 13M9 1.500V8.500`} stroke={G} />,
  <><path d="M9 1.500L16 5V13L9 16.500L2 13V5Z" fill={T} /><path d="M9 1.500L16 5L9 8.500L2 5Z" fill="#9fe0e6" /><path d={cubeLines} stroke={K} /></>,
  <><circle cx="9" cy="9" r="6.500" fill={G} /><path d="M9 3V15A6 6 0 0 0 15 9A6 6 0 0 0 9 3Z" fill="#555" /><path d="M11 4V14M13 5V13M9 7H15M9 10H15" stroke={G} strokeDasharray="1 1" /></>,
  <><path d={cubeLines} stroke={G} strokeWidth="2" fill="#2d6a70" /><path d="M9 1.500V16M2 9L9 12L16 9" stroke={T} /></>,
  <><circle cx="9" cy="9" r="6" fill="#444" stroke={G} /><path d="M5 5H14M6.500 7H15M4 9H16M5 11H14M6 13H13" stroke={G} strokeWidth="2" strokeDasharray="2 2" /></>,
  <><circle cx="9" cy="8" r="3.500" fill={G} /><path d="M7 12H11V16H7Z" fill={G} /><path d="M1 8H4M14 8H17M3 2L5 4M15 2L13 4M9 1V3" stroke={G} strokeWidth="1.500" /></>,
  <><path d="M2 10L8 15M4 8L9 13M1 12L6 16" stroke={G} strokeWidth="1.300" /><circle cx="11.500" cy="8" r="5" fill={T} /></>,
  'bar',
  <><circle cx="9" cy="7" r="5" fill={G} /><path d="M3 12L9 17L15 12M5 11L11 16M13 11L7 16" stroke={T} strokeDasharray="2 1" /></>,
  <><circle cx="5" cy="13" r="4" fill="#666" /><circle cx="9" cy="9" r="4.500" fill="#8a8a8a" /><circle cx="12" cy="6" r="4.500" fill={G} /></>,
  <><path d="M8 3A6 6 0 0 0 8 15" stroke={T} strokeWidth="2.500" /><path d="M9 3A6 6 0 0 1 9 15" stroke={G} strokeWidth="2.500" strokeDasharray="2 1" /></>,
  <><rect x="1" y="1" width="16" height="16" fill="#3d3d3d" stroke="#363636" /><path d="M4 4H10V10H4ZM8 8H15V15H8Z" fill="#43565a" /></>,
  'bar',
  <><rect x="2.500" y="2.500" width="9" height="9" stroke={T} strokeDasharray="2 1.500" strokeWidth="1.300" /><path d="M9 7V15L11 13.500L13 17L15 16L13 13H16Z" fill={G} /></>,
  'bar',
  <><rect width="18" height="18" fill={K} /><path d="M7 3H15V11H7Z" fill={G} /><path d="M3 7H11V15H3Z" fill={G} stroke={K} /><path d="M7 8H10V11H7Z" fill={K} /></>,
  <><rect width="18" height="18" fill={K} /><path d="M6 3H15V11H11" stroke={G} strokeWidth="1.300" /><path d="M2 7H10V15H2Z" fill={G} /></>,
  <><rect width="18" height="18" fill={K} /><rect x="3" y="3" width="12" height="12" stroke={G} strokeWidth="1.300" /><path d="M5 5H8L7 6L13 12L12 13L6 7L5 8Z" fill={G} /></>,
  'bar',
];

const curve: [number, number][] = [
  [971, 464], [1032, 458], [1058, 444], [1086, 420], [1101, 379], [1105, 351], [1108, 338], [1118, 340], [1114, 360], [1106, 393],
  [1088, 437], [1054, 459], [1008, 476], [991, 483], [986, 503], [999, 511], [983, 534], [976, 605], [971, 656], [971, 720], [975, 789],
  [991, 800], [1003, 811], [1009, 826], [1024, 836], [1050, 840], [1079, 849], [975, 850],
];
const hiddenPoints = [0, 16, 19];
const gridSteps = Array.from({ length: 47 }, (_, i) => i - 23);

const Viewport: React.FC = () => (
  <section className="flex min-w-0 flex-1 flex-col border border-[#8a8a8a]">
    <MenuRow items={['视图', '着色', '照明', '显示', '渲染器', '面板']} className="h-[23px] shrink-0 items-center pb-0.5 pl-2" />
    <div className="flex h-[18px] shrink-0 items-center overflow-hidden">
      {viewIcons.map((v, i) => v === 'bar'
        ? <Bar key={i} className="w-[11px]" h={16} />
        : <Tool key={i} label={`视图工具 ${i}`} className="h-[18px] w-[19px]" active={i === 9 || i === 18}><Icon box={18}>{v}</Icon></Tool>)}
      <Tool label="曝光" className="h-[18px] w-5"><Icon box={18}><circle cx="9" cy="9" r="6" fill={G} /><circle cx="9" cy="9" r="2" fill="#444" /><path d="M9 7L6 3M11 9L14 5M9 11L13 15M7 9L3 12" stroke="#444" /></Icon></Tool>
      <input aria-label="曝光值" defaultValue="0.00" className="h-[15px] w-[38px] shrink-0 rounded-xs bg-[#2b2b2b] text-center outline-none" />
      <Tool label="伽马" className="h-[18px] w-[23px]"><Icon box={18}><path d="M8 5A4 4 0 0 0 8 13ZM10 3H14V15H10V13A4 4 0 0 0 10 5Z" fill={G} /></Icon></Tool>
      <input aria-label="伽马值" defaultValue="1.00" className="h-[15px] w-[38px] shrink-0 rounded-xs bg-[#2b2b2b] text-center outline-none" />
      <button type="button" aria-label="颜色管理" className="ml-[3px] mr-[3px] flex h-[18px] w-[18px] shrink-0 items-center justify-center bg-[#5285a6]">
        <Icon box={18}><circle cx="9" cy="9" r="7" fill={T} stroke={K} /><text x="4.500" y="11.500" fontSize="6" fontWeight="700" fontFamily="Liberation Sans, sans-serif" fill="#333">ON</text></Icon>
      </button>
      <Dropdown label="视图变换" value="ACES 1.0 SDR-video (sRGB)" className="h-[17px] w-[220px]" />
    </div>
    <div className="relative min-h-0 flex-1 overflow-hidden bg-[#5c5c5c]">
      <svg className="absolute inset-0 h-full w-full" viewBox="316 207 1316 684" preserveAspectRatio="xMidYMid slice" aria-hidden="true">
        <g stroke="#434343" shapeRendering="crispEdges">
          {gridSteps.map((n) => <path key={`v${n}`} d={`M${Math.round(972 + n * 28.3)}.5 207V891`} strokeWidth={n === 0 ? 2 : 1} />)}
          {gridSteps.filter((n) => Math.abs(n) < 13).map((n) => <path key={`h${n}`} d={`M316 ${Math.round(548 + n * 28.3)}.5H1632`} strokeWidth={n === 0 ? 2 : 1} />)}
        </g>
        <rect x="969.500" y="519.500" width="16" height="16" fill="#b04040" stroke="#e01818" />
        <g transform="translate(.5 .5)">
          <polyline points={curve.map((p) => p.join(',')).join(' ')} fill="none" stroke="#fff" />
          <path d="M1050 457H1054V460M1056 459H1059V462H1056Z" fill="#c000c0" stroke="#c000c0" />
          {curve.map(([x, y], i) => !hiddenPoints.includes(i) && <circle key={i} cx={x} cy={y} r="2.600" fill="#ffff6e" />)}
        </g>
        <rect x="968.500" y="461.500" width="6" height="6" fill="#4a1a4a" stroke="#ffff6e" />
        <path d="M1044.500 500V575" stroke="#0f0" />
        <path d="M1044.500 482L1049 505H1040Z" fill="#0f0" />
        <rect x="1034.500" y="584.500" width="20" height="20" fill="none" stroke="#ffff6e" />
        <rect x="1044" y="594" width="1" height="1" fill="#ffff6e" />
        <path d="M341.500 852V865" stroke="#0e0" />
        <path d="M327 865.500H341" stroke="#00e" strokeWidth="1.500" />
        <g fontFamily="Liberation Sans, sans-serif" fontSize="10" fontWeight="700">
          <text x="339" y="848" fill="#0e0">y</text>
          <text x="323" y="864" fill="#00e">z</text>
          <text x="339" y="864" fill="#d22">x</text>
        </g>
      </svg>
      <span className="absolute bottom-2 left-[628px] font-['DejaVu_Sans',sans-serif] text-[9px] font-bold leading-3 text-white">side -X</span>
      <button type="button" className="absolute left-[662px] top-[319px] h-[21px] w-[88px] border border-black bg-[#525252] text-[#ddd]">Bezier</button>
      <button type="button" className="absolute left-[536px] top-[374px] h-[21px] w-[116px] border border-black bg-[#5285a6] text-[#e8e8e8]">Bezier 角点</button>
      <button type="button" className="absolute left-[761px] top-[374px] h-[21px] w-[77px] border border-black bg-[#525252] text-[#ddd]">角点</button>
      <div className="absolute left-[638px] top-[471px] w-[136px] border border-black bg-[#525252] text-[#ddd]">
        <p className="h-[22px] border-b border-[#777] pl-[25px] leading-5">切线选项</p>
        <ul className="pt-1">
          {['光滑锚点切线', '断开锚点切线', '平坦锚点切线', '不平坦锚点切线'].map((m) => (
            <li key={m}><button type="button" className="block h-5 pl-[25px] leading-5">{m}</button></li>
          ))}
        </ul>
      </div>
      <svg className="pointer-events-none absolute inset-0 h-full w-full" viewBox="316 207 1316 684" preserveAspectRatio="xMidYMid slice" aria-hidden="true">
        <path d="M931 597L1017 588V593L931 599Z" fill="#8a8a8a" />
        <path d="M988 594.500H1018" stroke="#d8b090" />
        <circle cx="1022.500" cy="590.500" r="6" fill="#7d7d7d" stroke="#111" />
      </svg>
    </div>
  </section>
);

const layerIcons: [string, React.ReactNode][] = [
  ['上移层', <path d="M11 14V8H9L12 4L15 8H13V14Z" fill={T} stroke={T} />],
  ['下移层', <path d="M11 4V10H9L12 14L15 10H13V4Z" fill={T} stroke={T} />],
  ['新建空层', <path d="M12 0V7M8.500 3.500H15.500" stroke={T} strokeWidth="2" />],
  ['新建层', <circle cx="12" cy="4" r="3.300" fill={T} />],
];

const ChannelBox: React.FC = () => (
  <section className="flex w-[263px] shrink-0 flex-col">
    <div className="flex h-[22px] shrink-0 items-center justify-end gap-[5px] pr-[5px]">
      <Icon size={16} box={16}><path d="M8 5V10L3 13M8 10L13 13" stroke={G} strokeWidth="2" /><path d="M5 5L8 1L11 5Z" fill="#7fb341" /><path d="M1 10L5 14L1 15Z" fill="#4a7ee0" stroke="#4a7ee0" /><path d="M15 10L11 14L15 15Z" fill="#d94a4a" stroke="#d94a4a" /></Icon>
      <Icon size={16} box={16}><path d="M3 14A6 6 0 1 1 13 13" stroke={T} strokeWidth="3.500" /><path d="M6 9C6 7 10 7 10 9" stroke={T} strokeWidth="2" /><circle cx="12" cy="13" r="2" fill="#888" /></Icon>
      <Icon size={16} box={16}><path d="M2 1V14H15" stroke="#8a8a8a" strokeWidth="1.300" /><path d="M4 12L13 3" stroke={T} strokeWidth="2" /><path d="M9 2H15V7Z" fill={T} /></Icon>
    </div>
    <MenuRow items={['通道', '编辑', '对象', '显示']} className="h-[25px] shrink-0 items-center pl-3" />
    <div className="h-[49px] shrink-0 pl-[5px] pt-[3px] font-['Liberation_Mono','Noto_Sans_CJK_SC',monospace] font-bold leading-4">
      <p>bezierShape1</p>
      <p>CV (单击以显示)</p>
    </div>
    <div className="ml-[5px] mr-1 min-h-0 flex-1 bg-[#2b2b2b]" />
    <span className="mx-auto mb-[9px] mt-[2px] w-[85px] border-t border-dotted border-[#8a8a8a]" />
    <div className="mb-1 ml-1 mr-[3px] flex shrink-0 flex-col">
      <div className="flex h-5 items-end gap-0.5 bg-[#373737] pl-0.5">
        <button type="button" className="h-[18px] w-[51px] rounded-t-sm bg-[#444] text-[#eee]">显示</button>
        <button type="button" className="h-[18px] w-[51px] rounded-t-sm border border-b-0 border-[#2b2b2b] text-[#8a8a8a]">动画</button>
      </div>
      <div className="flex flex-col border border-t-0 border-[#2b2b2b] px-[3px] pb-[3px]">
        <MenuRow items={['层', '选项', '帮助']} className="h-[26px] items-center pl-[7px]" />
        <div className="flex h-[25px] items-center justify-end gap-[7px] pb-1 pr-1">
          {layerIcons.map(([n, i], k) => (
            <button type="button" key={n} aria-label={n} className={k === 2 ? 'ml-1' : ''}>
              <Icon size={16} box={16}><path d={k < 2 ? 'M1 9L8 4V14Z' : 'M1 9L7 4L12 9L7 14Z'} fill={G} />{i}</Icon>
            </button>
          ))}
        </div>
        <div className="h-[230px] bg-[#2b2b2b]" />
        <HScroll thumb="w-[69%]" />
      </div>
    </div>
  </section>
);

const sideTabs: [string, string][] = [
  ['通道盒/层编辑器', 'h-[116px] bg-[#444] text-[#eee]'],
  ['建模工具包', 'h-[88px] border border-[#2b2b2b] text-[#8a8a8a]'],
  ['属性编辑器', 'h-[88px] border border-[#2b2b2b] text-[#8a8a8a]'],
];

const ticks = Array.from({ length: 24 }, (_, i) => (i + 1) * 5);

const playback: [string, React.ReactNode][] = [
  ['转到开头', <path d="M2 4V16H3.500V4ZM4 10L10 4V16ZM11 10L17 4V16Z" fill={G} />],
  ['后退一帧', <path d="M5 4V16H6.500V4ZM7 10L15 4V16Z" fill={G} />],
  ['后退一关键帧', <><path d="M4 2V18" stroke={G} /><path d="M3 4H6V16H3Z" fill="#e0793c" /><path d="M7 10L15 4V16Z" fill={G} /></>],
  ['向后播放', <path d="M3 10L16 2V18Z" fill={G} />],
  ['向前播放', <path d="M17 10L4 2V18Z" fill={G} />],
  ['前进一关键帧', <><path d="M16 2V18" stroke={G} /><path d="M14 4H17V16H14Z" fill="#e0793c" /><path d="M13 10L5 4V16Z" fill={G} /></>],
  ['前进一帧', <path d="M15 4V16H13.500V4ZM13 10L5 4V16Z" fill={G} />],
  ['转到结尾', <path d="M18 4V16H16.500V4ZM16 10L10 4V16ZM9 10L3 4V16Z" fill={G} />],
];

const numberField = 'w-[88px] shrink-0 rounded-xs bg-[#2b2b2b] px-1.5 text-[#c8c8c8] outline-none';

const TimeSlider: React.FC = () => (
  <div className="flex h-[38px] shrink-0">
    <Grip />
    <div className="mb-1 ml-1.5 mt-1 flex min-w-0 flex-1 flex-col bg-[#2b2b2b]">
      <div className="flex h-[27px]">
        <div className="w-[60px] shrink-0 pl-[9px]">
          <span className="relative z-10 flex h-[30px] w-[11px] items-center justify-center bg-[#5d5d5d] text-[#eee]">1</span>
        </div>
        {ticks.map((t) => (
          <div key={t} className={`flex h-[27px] flex-col justify-between ${t === 120 ? 'w-[21px] shrink-0 overflow-hidden' : 'min-w-0 flex-1'}`}>
            <span className="pl-[3px] text-[#777]">{t}</span>
            <span className="h-[9px] w-0.5 bg-[#777]" />
          </div>
        ))}
      </div>
      <div className="ml-5 mr-2 h-[3px] bg-[#373737]" />
    </div>
    <input aria-label="当前帧" defaultValue="1" className={`ml-[7px] mt-[10px] h-[22px] ${numberField}`} />
    <div className="ml-[5px] mr-[10px] flex items-start pt-[7px]">
      {playback.map(([n, i]) => <Tool key={n} label={n}><Icon>{i}</Icon></Tool>)}
    </div>
  </div>
);

const RangeSlider: React.FC = () => (
  <div className="flex h-[33px] shrink-0 items-center">
    <Grip />
    <input aria-label="动画开始" defaultValue="1" className={`ml-[7px] h-[23px] ${numberField}`} />
    <input aria-label="播放开始" defaultValue="1" className={`ml-2 h-[23px] ${numberField}`} />
    <div className="ml-[7px] flex h-[23px] min-w-0 flex-1 items-center bg-[#373737] pl-[7px]">
      {/* 120 of the 200 frames, with a little slack for the handles */}
      <div className="flex h-[18px] flex-[120] items-center gap-1.5 rounded-sm bg-[#5d5d5d] px-1 text-[#c8c8c8]">
        <span className="h-3 w-[13px] rounded-sm bg-[#939393]" />
        <span>1</span>
        <span className="ml-auto">120</span>
        <span className="-ml-0.5 h-3 w-[13px] rounded-sm bg-[#939393]" />
      </div>
      <span className="flex-[79]" />
    </div>
    <input aria-label="播放结束" defaultValue="120" className={`ml-[7px] h-[23px] ${numberField}`} />
    <input aria-label="动画结束" defaultValue="200" className={`ml-2 h-[23px] ${numberField}`} />
    <Bar className="w-[11px]" h={20} />
    <Tool label="书签" className="ml-1.5 h-[22px] w-[22px]"><Icon><path d="M4 3H13V19L8.500 14L4 19Z" fill="#e06d3c" /><path d="M14 2V11M9.500 6.500H18.500" stroke="#444" strokeWidth="3.500" /><path d="M14 3V10M10.500 6.500H17.500" stroke={G} strokeWidth="1.700" /></Icon></Tool>
    {[1, 2, 3].map((n) => <Tool key={n} label={`更多 ${n}`} className="h-[22px] w-[21px]"><Icon><path d="M8.500 1V19" stroke="#999" /><path d="M9 5L12 10L9 15Z" fill="#999" /></Icon></Tool>)}
    <span className="w-[9px]" />
  </div>
);

const CommandLine: React.FC = () => (
  <div className="flex h-8 shrink-0 items-center">
    <Grip />
    <label htmlFor="mel" className="ml-[15px] w-[37px] text-[#ddd]">MEL</label>
    <input id="mel" className="h-[22px] w-[527px] rounded-xs bg-[#2b2b2b] px-1 outline-none" />
    <span className="mx-[3px] h-2.5 border-l-2 border-dotted border-[#777]" />
    <output className="h-6 flex-1 bg-[#2b2b2b]" />
    <button type="button" aria-label="脚本编辑器" className="ml-[5px] mr-2">
      <Icon box={20}><path d="M1 1H19V19H1Z" fill={G} /><path d="M1 5H19M3 3H4M5 3H6M7 3H8" stroke="#444" /><path d="M7 7C5 7 6 9 5.500 11.500L4 12L5.500 12.500C6 15 5 17 7 17M13 7C15 7 14 9 14.500 11.500L16 12L14.500 12.500C14 15 15 17 13 17" stroke="#444" strokeWidth="1.300" /><path d="M10 9V10.500M10 12.500V15" stroke="#444" strokeWidth="1.500" /></Icon>
    </button>
  </div>
);

/* ---------- desktop taskbar ---------- */

const taskApps: { name: string; mark?: 'line' | 'active'; icon: React.ReactNode }[] = [
  { name: 'QQ', icon: <><ellipse cx="15" cy="28" rx="10" ry="2" fill="#f5a623" /><path d="M15 1C8 1 6 7 7 12C4 15 2 20 4 23L7 21C8 26 11 28 15 28S22 26 23 21L26 23C28 20 26 15 23 12C24 7 22 1 15 1Z" fill="#111" /><path d="M15 15C8 15 8 27 15 27S22 15 15 15Z" fill="#fff" /><ellipse cx="12.500" cy="7" rx="1.800" ry="2.500" fill="#fff" /><ellipse cx="17.500" cy="7" rx="1.800" ry="2.500" fill="#fff" /><ellipse cx="15" cy="11" rx="5" ry="1.800" fill="#f5a623" /><path d="M7 13C11 16 19 16 23 13V16C20 18 15 18 12 17V21H9V16Z" fill="#e12020" /></> },
  { name: '文件资源管理器', icon: <><path d="M2 3H12L14 6H26V10H2Z" fill="#d9960f" /><path d="M2 7H28V26H2Z" fill="#ffd25e" /><path d="M7 28V18H24V28H19V23H12V28Z" fill="#3f95d8" /></> },
  { name: 'Chrome', mark: 'line', icon: <><circle cx="15" cy="15" r="14" fill="#34a853" /><path d="M3 8A14 14 0 0 1 27 8L15 15Z" fill="#ea4335" /><path d="M27.500 8.500A14 14 0 0 1 15 29L20 15L15 8.500Z" fill="#fbbc05" /><path d="M3 8L10 19L15 9H27.500A14 14 0 0 0 3 8Z" fill="#ea4335" /><circle cx="15" cy="15" r="6.500" fill="#fff" /><circle cx="15" cy="15" r="5" fill="#2b7de9" /></> },
  { name: '腾讯视频', icon: <><path d="M8 1C14 2 30 11 30 15S14 28 8 29Z" fill="#2fb4f5" /><path d="M1 3C8 1 13 6 14 15S8 28 2 27C0 20 0 10 1 3Z" fill="#ff9c1a" /><path d="M5 5C12 7 23 13 23 15S10 25 6 26C4 20 4 11 5 5Z" fill="#73c52c" /><path d="M10 10L19 15L10 20Z" fill="#fff" /></> },
  { name: 'IntelliJ IDEA', icon: <><path d="M3 1L12 4L1 18Z" fill="#fdb60d" /><path d="M0 10L14 4L12 29L2 26Z" fill="#fe315d" /><path d="M12 4L24 2L29 8L26 16L29 26L16 29L12 24Z" fill="#1d8ff5" /><path d="M2 25L14 22L15 30Z" fill="#f97a12" /><rect x="5" y="6" width="20" height="19" fill="#100612" /><text x="8" y="15" fontSize="9" fontWeight="700" fontFamily="Liberation Sans, sans-serif" fill="#fff">IJ</text><path d="M8 21H15" stroke="#fff" strokeWidth="1.300" /></> },
  { name: 'Steam', icon: <><circle cx="15" cy="15" r="14" fill="#13386a" /><path d="M1 13A14 14 0 0 1 29 13Z" fill="#0c1d3d" /><circle cx="19" cy="11" r="5" stroke="#eee" strokeWidth="2" /><circle cx="19" cy="11" r="2.500" fill="#eee" /><path d="M1 16L11 20L16 15" stroke="#eee" strokeWidth="4" /><circle cx="11" cy="21" r="3.500" fill="#13386a" stroke="#eee" strokeWidth="1.500" /></> },
  { name: 'Maya', mark: 'active', icon: null },
  { name: '微信', mark: 'line', icon: <><path d="M11 3C4 3 0 8 0 12C0 16 2 18 4 20L3 24L8 21C16 22 22 18 22 12C22 7 17 3 11 3Z" fill="#24cf66" /><circle cx="7.500" cy="9" r="1.300" fill="#12713a" /><circle cx="14.500" cy="9" r="1.300" fill="#12713a" /><path d="M21 12C16 12 12 15 12 19S17 26 22 25L27 27L26 24C29 22 30 21 30 19C30 15 26 12 21 12Z" fill="#f3f3f3" stroke="#ddd" strokeWidth=".5" /><circle cx="18" cy="17" r="1.200" fill="#888" /><circle cx="24" cy="17" r="1.200" fill="#888" /></> },
  { name: 'VS Code', icon: <><path d="M21 1L29 4V26L21 29L0 12L4 8L21 21V9L4 22L0 18Z" fill="#0b7fd0" /><path d="M21 1L29 4V26L21 29Z" fill="#2ba8f2" /></> },
  { name: 'Gitee', icon: <><rect width="30" height="30" rx="3" fill="#1b1b1b" /><path d="M20 6C14 3 7 8 8 16C9 25 20 26 22 17M12 15L15 12L18 16L22 15" stroke="#f8703c" strokeWidth="2" /><path d="M21 7C18 4 10 6 9 12" stroke="#f7d94c" strokeWidth="2" /></> },
  { name: '鲨鱼', icon: <><rect width="30" height="30" rx="3" fill="#fb7a2b" /><path d="M5 9C9 3 20 2 26 5L23 9L26 14L21 13C20 21 16 24 14 27C12 23 17 20 15 14L5 14Z" fill="#f4f1ea" stroke="#333" strokeWidth=".8" /><circle cx="9" cy="19" r="4" stroke="#f7c12d" strokeWidth="1.500" /><circle cx="12" cy="8" r="1" fill="#222" /></> },
  { name: 'PyCharm', icon: <><path d="M1 5L12 0L18 6L9 26L0 28Z" fill="#21d789" /><path d="M11 0L24 2L30 12L26 17L18 8Z" fill="#0bc3d8" /><path d="M20 3L28 13L30 23L26 30L5 29L8 20Z" fill="#e4f44a" /><rect x="5" y="5" width="20" height="20" fill="#050505" /><text x="7" y="15" fontSize="9" fontWeight="700" fontFamily="Liberation Sans, sans-serif" fill="#fff">PC</text><path d="M8 22H15" stroke="#fff" strokeWidth="1.300" /></> },
  { name: 'Unity Hub', icon: <><path d="M15 1L27 8L15 15L3 8Z" fill="#fafafa" /><path d="M3 8L15 15V29L3 22Z" fill="#c4c4c4" /><path d="M27 8L15 15V29L27 22Z" fill="#9a9a9a" /><path d="M15 9L21 12V19L15 22L9 19V12Z" stroke="#222" strokeWidth="2.500" fill="#bbb" /><path d="M15 15V22M15 15L9 12M15 15L21 12" stroke="#222" strokeWidth="2" /></> },
  { name: '战网', icon: <><circle cx="15" cy="15" r="15" fill="#0b70e0" /><path d="M13 6C17 3 20 14 16 22C14 26 10 24 13 17M7 16C4 11 15 10 23 14C26 17 23 19 18 19M10 22C14 22 20 15 21 10M13 6C11 9 10 13 11 19" stroke="#fff" strokeWidth="1.600" /></> },
  { name: '百度网盘', icon: <><rect width="30" height="30" rx="5" fill="#fff" /><circle cx="9" cy="18" r="4.500" stroke="#25b7f4" strokeWidth="2.500" /><circle cx="21" cy="18" r="4.500" stroke="#25b7f4" strokeWidth="2.500" /><circle cx="15" cy="11" r="5" stroke="#2a9ff2" strokeWidth="2.500" /><circle cx="15" cy="13" r="3" stroke="#f2506a" strokeWidth="2" /><path d="M10 29H15" stroke="#f2506a" strokeWidth="2" /><path d="M15 29H20" stroke="#2a7ff2" strokeWidth="2" /></> },
  { name: 'Eclipse', icon: <><circle cx="13.500" cy="15" r="13.500" fill="#f7941e" /><circle cx="17" cy="15" r="13.500" fill="#eee" /><circle cx="17" cy="15" r="13" fill="#2c2255" /><path d="M4 11.500H30M4 15H30M4 18.500H30" stroke="#fff" strokeWidth="1.700" /></> },
  { name: 'HBuilder', icon: <><path d="M2 0H28L26 26L15 30L4 26Z" fill="#1da735" /><path d="M10 7V21M20 7V21M10 14H20" stroke="#fff" strokeWidth="2.500" /></> },
  { name: '微信开发者工具', icon: <><circle cx="15" cy="14" r="13" fill="#e6e6e6" /><path d="M5 24L4 28L10 26Z" fill="#e3e3e3" /><path d="M12 9L16 12L12 15M17 17H21" stroke="#26c26b" strokeWidth="1.700" /><circle cx="24" cy="11" r="1.500" fill="#26c26b" /></> },
  { name: 'Navicat', icon: <g strokeWidth="3"><path d="M3 16C0 6 6 1 11 3C15 6 13 12 8 13" stroke="#3d84f5" /><path d="M16 13C14 6 20 0 24 4C30 9 29 20 25 24" stroke="#f9a51a" /><path d="M5 17C1 32 25 33 27 20C26 12 16 12 15 18" stroke="#78c43f" /></g> },
  { name: '墨水滴', icon: <><circle cx="15" cy="15" r="13" fill="#44545b" /><path d="M15 5C19 12 21 15 20 19C19 24 11 24 10 19C9 15 12 12 15 5Z" stroke="#fff" strokeWidth="1.700" /><path d="M15 10V21" stroke="#87949a" strokeWidth="2" /></> },
  { name: '红星', icon: <><rect x="1" y="1" width="28" height="28" rx="5" fill="#b02418" /><path d="M14 7L17 12L23 13L19 18L20 25L14 22L7 25L9 18L5 11L11 12Z" stroke="#fff" strokeWidth="2" /><circle cx="23" cy="5" r="2" fill="#fff" /></> },
  { name: 'Postman', icon: <><circle cx="15" cy="15" r="14" fill="#ff6c37" /><path d="M22 7L17 12L8 22L12 20L20 12" stroke="#fff" strokeWidth="2.500" /><circle cx="21" cy="8" r="2.500" fill="#fff" /></> },
  { name: '飞鸟', icon: <><rect width="30" height="30" rx="4" fill="#3d85ff" /><path d="M2 9C7 14 10 13 14 12C17 9 18 6 24 3C23 7 24 8 28 9C23 11 22 20 16 21C18 24 20 25 22 27C13 28 9 21 10 18C6 16 3 13 2 9Z" fill="#fff" /></> },
];

const Taskbar: React.FC = () => (
  <footer className="relative flex h-[50px] shrink-0 items-stretch bg-[#eee] text-black">
    <button type="button" aria-label="开始" className="flex w-[60px] shrink-0 items-center justify-center">
      <Icon box={20}><path d="M0 3L9 2V9.500H0ZM10 1.800L20 0V9.500H10ZM0 10.500H9V18L0 17ZM10 10.500H20V20L10 18.200Z" fill="#000" /></Icon>
    </button>
    <button type="button" aria-label="搜索" className="flex w-[63px] shrink-0 items-center justify-center">
      <Icon box={22}><circle cx="13" cy="8" r="6.500" stroke="#000" strokeWidth="1.300" /><path d="M8.500 13L1 21" stroke="#000" strokeWidth="1.300" /></Icon>
    </button>
    {taskApps.map(({ name, mark, icon }) => (
      <button type="button" key={name} aria-label={name} className={`flex w-[62px] shrink-0 flex-col items-center ${mark === 'active' ? 'bg-[#fbfbfb]' : ''}`}>
        <span className="flex h-[47px] items-center pt-[3px]">
          {mark === 'active' ? <MayaLogo size={30} plate /> : <Icon box={30}>{icon}</Icon>}
        </span>
        {mark && <span className={`h-[3px] bg-[#555] ${mark === 'active' ? 'w-full' : 'w-[51px]'}`} />}
      </button>
    ))}
    <div className="ml-auto flex shrink-0 items-center">
      <button type="button" aria-label="显示隐藏的图标" className="flex w-[31px] justify-center"><Icon box={18}><path d="M1 13L9 5L17 13" stroke="#000" strokeWidth="1.300" /></Icon></button>
      <button type="button" aria-label="音量" className="flex w-[30px] justify-center"><Icon box={20}><path d="M1 7H4L8 3V17L4 13H1Z" stroke="#000" /><path d="M10 8C11 9 11 11 10 12M13 6C15 8 15 12 13 14" stroke="#000" /><path d="M16 3C19 7 19 13 16 17" stroke="#aaa" /></Icon></button>
      <button type="button" aria-label="电池" className="flex w-[30px] justify-center"><Icon box={20}><path d="M6 5H18V15H5V9" stroke="#000" /><path d="M7 7H17V13H7Z" fill="#000" /><path d="M1 3V6H5V3M2 1V3M4 1V3M3 6V10" stroke="#000" /></Icon></button>
      <button type="button" aria-label="网络" className="flex w-[31px] justify-center"><Icon box={18}><path d="M2 13C4 7 9 3 16 3M6 15C7 10 11 7 16 7M9 16C10 13 13 11 16 11" stroke="#333" /><circle cx="15" cy="15" r="1.500" fill="#000" /></Icon></button>
      <button type="button" className="w-[26px] text-center text-base">英</button>
      <div className="w-[94px] text-center font-['Open_Sans',sans-serif] text-[15px] leading-[23px]">
        <p>21:02</p>
        <p>2023/3/8</p>
      </div>
      <button type="button" aria-label="通知" className="flex w-[50px] justify-center"><Icon box={20}><path d="M0 0H20V15H14V19L9 15H0Z" fill="#000" /><path d="M4 4.500H16M4 8H16M4 11.500H12" stroke="#fff" /></Icon></button>
      <span className="ml-[10px] mr-[5px] h-[50px] w-px bg-[#aaa]" />
    </div>
    <span className="pointer-events-none absolute bottom-2 right-[14px] font-['Liberation_Sans',sans-serif] text-[18px] leading-6 text-[#808080]/90 [text-shadow:0_0_2px_#fff]">CSDN @you_are_my_sql</span>
  </footer>
);

const App: React.FC = () => (
  <div className="flex h-screen min-h-[800px] flex-col overflow-hidden bg-[#444] font-['Noto_Sans','Noto_Sans_CJK_SC',sans-serif] text-[12px] leading-4 text-[#c8c8c8]">
    <header className="flex h-[29px] shrink-0 items-center bg-white pl-[3px] text-black">
      <MayaLogo size={18} plate />
      <h1 className="ml-[6px] whitespace-pre font-['Open_Sans','Noto_Sans_CJK_SC',sans-serif] text-base leading-5">无标题* - Autodesk MAYA 2022: 无标题   ---   bezier1.cv[0]...</h1>
      <div className="ml-auto flex">
        <button type="button" aria-label="最小化" className="flex w-[58px] justify-center"><Icon box={13}><path d="M0 6.500H13" stroke="#000" /></Icon></button>
        <button type="button" aria-label="还原" className="flex w-[58px] justify-center"><Icon box={13}><path d="M.5 3.500H9.500V12.500H.5ZM3 3V.5H12.500V10H10" stroke="#000" strokeWidth="1.300" /></Icon></button>
        <button type="button" aria-label="关闭" className="mr-1 flex w-[58px] justify-center"><Icon box={13}><path d="M0 0L13 13M13 0L0 13" stroke="#000" strokeWidth="1.200" /></Icon></button>
      </div>
    </header>
    <div className="flex h-[26px] shrink-0 items-center">
      <MenuRow items={['文件', '编辑', '创建', '选择', '修改', '显示', '窗口', '网格', '编辑网格', '网格工具', '网格显示', '曲线', '曲面', '变形', 'UV', '生成', '缓存', 'Arnold', '帮助']} className="pb-0.5 pl-[9px]" />
      <span className="ml-auto mr-2">工作区:</span>
      <Dropdown label="工作区" value="Maya 经典*" className="h-[22px] w-[161px]" />
      <button type="button" aria-label="锁定工作区" className="ml-1 mr-1 flex w-5 justify-center"><Icon box={18}><path d="M6 8V5C6 1 12 1 12 5V8" stroke={G} strokeWidth="2" /><rect x="3" y="8" width="12" height="9" rx="1" fill={G} /><path d="M7.500 11H10.500L9 15Z" fill={K} /></Icon></button>
    </div>
    <StatusLine />
    <Rule />
    <div className="h-[3px] shrink-0" />
    <Shelf />
    <Rule />
    <main className="flex min-h-0 flex-1">
      <Toolbox />
      <div className="w-0.5 shrink-0 bg-[#373737]" />
      <Outliner />
      <div className="mr-[3px] w-0.5 shrink-0 bg-[#373737]" />
      <div className="flex min-w-0 flex-1 pb-0.5 pt-[3px]"><Viewport /></div>
      <div className="ml-0.5 w-0.5 shrink-0 bg-[#373737]" />
      <ChannelBox />
      <aside className="flex w-5 shrink-0 flex-col gap-0.5 bg-[#373737] pt-0.5">
        {sideTabs.map(([name, cls]) => (
          <button type="button" key={name} className={`flex w-[18px] items-center justify-center whitespace-nowrap rounded-r-sm [text-orientation:sideways] [writing-mode:vertical-rl] ${cls}`}>{name}</button>
        ))}
      </aside>
    </main>
    <Rule />
    <TimeSlider />
    <Rule />
    <RangeSlider />
    <Rule />
    <CommandLine />
    <Rule />
    <div className="flex h-6 shrink-0 items-center">
      <Grip />
      <p className="ml-[17px] whitespace-nowrap text-[11px]">移动工具: 使用操纵器移动对象。按住 Ctrl 键并使用鼠标中键拖动以沿法线移动组件。按住 Shift 键并拖动操纵器轴或平面控制柄以挤出组件或克隆对象。按住 Ctrl+Shift 键并拖动以将移动约束到连接边。使用 D 或 Insert 键更改枢轴位置和轴方向。</p>
    </div>
    <Taskbar />
  </div>
);

export default App;
